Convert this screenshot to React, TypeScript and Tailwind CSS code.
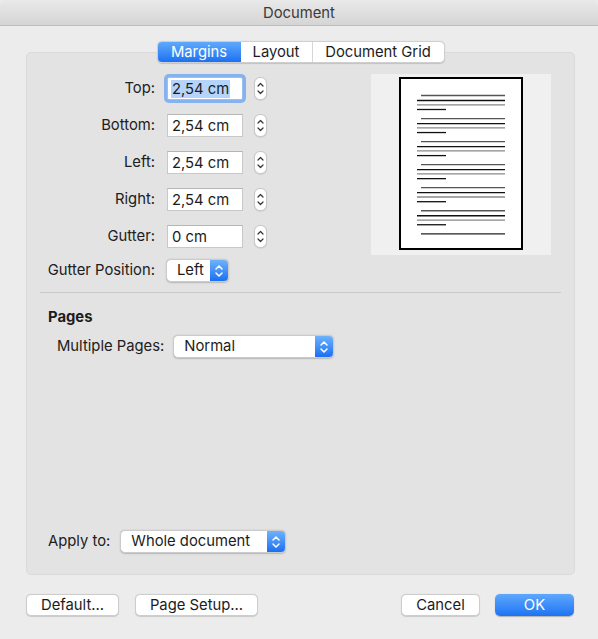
import React from 'react';

const font = { fontFamily: 'Inter, "Liberation Sans", sans-serif' };

const Stepper = () => (
    <div className="w-[13px] h-[23px] rounded-[6px] bg-white border border-[#c9c9c9] shadow-[0_0.5px_1px_rgba(0,0,0,0.15)] flex items-center justify-center">
        <svg width="9" height="17" viewBox="0 0 9 17" fill="none" stroke="#333" strokeWidth="1.2" strokeLinecap="round" strokeLinejoin="round">
            <path d="M2 6 L4.5 3.5 L7 6" />
            <path d="M2 11 L4.5 13.5 L7 11" />
        </svg>
    </div>
);

const Chevrons = () => (
    <svg width="10" height="16" viewBox="0 0 10 16" fill="none" stroke="#fff" strokeWidth="1.5" strokeLinecap="round" strokeLinejoin="round">
        <path d="M2 6 L5 3 L8 6" />
        <path d="M2 10 L5 13 L8 10" />
    </svg>
);

const PopUp = ({ value, width }: { value: string; width: string }) => (
    <div className={`${width} h-[23px] flex rounded-[5px] bg-white border border-[#cbcbcb] shadow-[0_0.5px_1.5px_rgba(0,0,0,0.2)] overflow-hidden`}>
        <div className="flex-1 flex items-center pl-[10px] text-[#1c1c1c] whitespace-nowrap">{value}</div>
        <div className="w-[18px] flex items-center justify-center bg-gradient-to-b from-[#6db2fb] to-[#196ff2]">
            <Chevrons />
        </div>
    </div>
);

const Field = ({ label, value, focused }: { label: string; value: string; focused?: boolean }) => (
    <div className="flex items-center h-[23px]">
        <div className="w-[112px] text-right whitespace-nowrap text-[#202020]">{label}</div>
        <div
            className={`ml-[12px] w-[76px] h-[23px] bg-white flex items-center pl-[3px] border ${
                focused ? 'border-[#9dbfee] ring-[3px] ring-[#86b2ef] rounded-[2px]' : 'border-[#c8c8c8] border-t-[#b5b5b5]'
            }`}
        >
            <span className={`px-[1px] leading-[18px] text-[#1c1c1c] ${focused ? 'bg-[#b4d4fc]' : ''}`}>{value}</span>
        </div>
        <div className="ml-[11px]">
            <Stepper />
        </div>
    </div>
);

const PagePreview = () => {
    const groups = [0, 1, 2, 3, 4, 5];
    return (
        <div className="w-[180px] h-[181px] bg-[#f0f0f0] pl-[28px] pt-[3px]">
            <svg width="124" height="173" viewBox="0 0 124 173">
                <rect x="1" y="1" width="122" height="171" fill="#fff" stroke="#000" strokeWidth="2" />
                {groups.map(i => {
                    const y = 18.5 + i * 23.05;
                    return (
                        <g key={i} strokeWidth="1.3">
                            <line x1="22" x2="106" y1={y} y2={y} stroke="#555" />
                            <line x1="18" x2="106" y1={y + 5} y2={y + 5} stroke="#111" />
                            <line x1="18" x2="106" y1={y + 9.3} y2={y + 9.3} stroke="#888" />
                            <line x1="18" x2="47" y1={y + 14} y2={y + 14} stroke="#111" />
                        </g>
                    );
                })}
                <line x1="22" x2="106" y1="156.8" y2="156.8" stroke="#222" strokeWidth="1.3" />
            </svg>
        </div>
    );
};

const Button = ({ children, width, primary }: { children: React.ReactNode; width: string; primary?: boolean }) => (
    <button
        className={`${width} h-[22px] rounded-[5px] flex items-center justify-center ${
            primary
                ? 'bg-gradient-to-b from-[#5ea8fc] to-[#1c72f4] text-white shadow-[0_0.5px_1px_rgba(0,0,0,0.25)]'
                : 'bg-white border border-[#cdcdcd] text-[#1c1c1c] shadow-[0_0.5px_1px_rgba(0,0,0,0.15)]'
        }`}
    >
        {children}
    </button>
);

export default function App() {
    return (
        <div className="w-[598px] h-[639px] bg-[#ececec] flex flex-col text-[14.8px] overflow-hidden" style={font}>
            <div className="h-[26px] shrink-0 pt-[2px] rounded-t-[5px] bg-gradient-to-b from-[#e9e9e9] to-[#d5d5d5] border-b border-[#bcbcbc] flex items-center justify-center text-[#3a3a3a]">
                Document
            </div>

            <div className="flex flex-col px-[26px] pr-[23px] flex-1">
                <div className="flex justify-center mt-[15px] relative z-10">
                    <div className="flex h-[22px] rounded-[5px] bg-white border border-[#cfcfcf] shadow-[0_0.5px_1px_rgba(0,0,0,0.15)] overflow-hidden">
                        <div className="w-[83px] flex items-center justify-center text-white bg-gradient-to-b from-[#5fa9fc] to-[#1b70f3]">
                            Margins
                        </div>
                        <div className="w-[72px] flex items-center justify-center text-[#1c1c1c] border-r border-[#d6d6d6]">
                            Layout
                        </div>
                        <div className="w-[131px] flex items-center justify-center text-[#1c1c1c]">Document Grid</div>
                    </div>
                </div>

                <div className="-mt-[11px] h-[523px] rounded-[5px] bg-[#e3e3e3] border border-[#dadada] flex flex-col">
                    <div className="flex items-start pt-[21px] pr-[23px]">
                        <div className="flex flex-col pl-[16px] pt-[3px]">
                            <div className="flex flex-col gap-[14px]">
                                <Field label="Top:" value="2,54 cm" focused />
                                <Field label="Bottom:" value="2,54 cm" />
                                <Field label="Left:" value="2,54 cm" />
                                <Field label="Right:" value="2,54 cm" />
                                <Field label="Gutter:" value="0 cm" />
                            </div>
                            <div className="flex items-center mt-[11px]">
                                <div className="w-[112px] text-right whitespace-nowrap text-[#202020]">Gutter Position:</div>
                                <div className="ml-[11px]">
                                    <PopUp value="Left" width="w-[63px]" />
                                </div>
                            </div>
                        </div>
                        <div className="ml-auto">
                            <PagePreview />
                        </div>
                    </div>

                    <div className="mx-[13px] mt-[10px] h-px bg-[#cacaca]" />

                    <div className="pl-[21px] mt-[14px] font-bold text-[#1c1c1c] leading-[20px]">Pages</div>
                    <div className="flex items-center pl-[30px] mt-[8px]">
                        <div className="text-[#202020] whitespace-nowrap">Multiple Pages:</div>
                        <div className="ml-[9px]">
                            <PopUp value="Normal" width="w-[161px]" />
                        </div>
                    </div>

                    <div className="flex-1" />

                    <div className="flex items-center pl-[21px] mb-[21px]">
                        <div className="text-[#202020] whitespace-nowrap">Apply to:</div>
                        <div className="ml-[10px]">
                            <PopUp value="Whole document" width="w-[166px]" />
                        </div>
                    </div>
                </div>

                <div className="flex items-center mt-[19px]">
                    <Button width="w-[93px]">Default...</Button>
                    <div className="ml-[16px]">
                        <Button width="w-[123px]">Page Setup...</Button>
                    </div>
                    <div className="ml-auto flex gap-[15px] pr-[1px]">
                        <Button width="w-[79px]">Cancel</Button>
                        <Button width="w-[79px]" primary>
                            OK
                        </Button>
                    </div>
                </div>
            </div>
        </div>
    );
}
